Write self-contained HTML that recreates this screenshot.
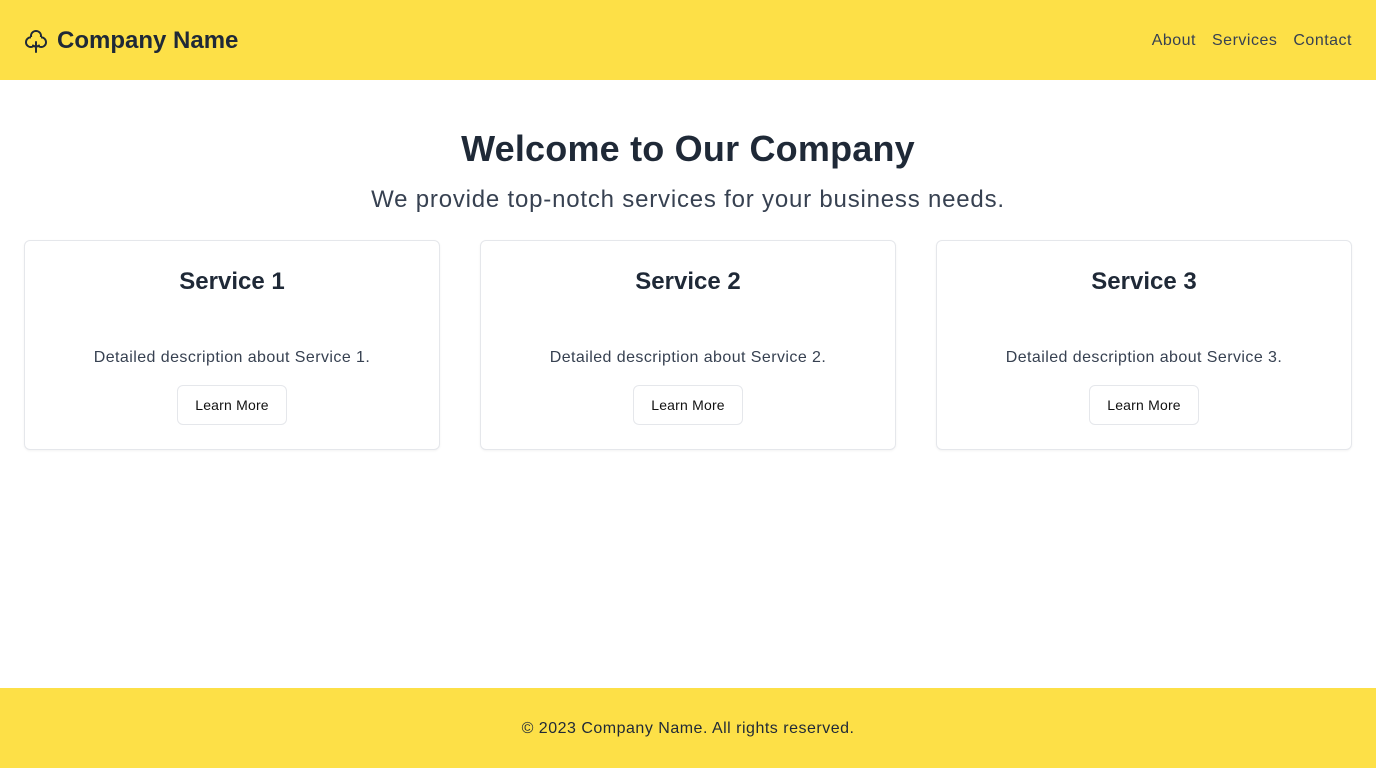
<!DOCTYPE html>
<html><head><style>
*{box-sizing:border-box;margin:0;padding:0}
body{width:1376px;height:768px;font-family:"Liberation Sans",sans-serif;background:#fff;color:#1f2937;position:relative;overflow:hidden}
header{height:80px;background:#fde047;display:flex;align-items:center;justify-content:space-between;padding:0 24px}
.logo{display:flex;align-items:center;font-weight:bold;font-size:24px;color:#1f2937;position:relative;top:1px}
.logo svg{margin-right:9px}
nav{position:relative;top:1px}
nav a{color:#374151;text-decoration:none;font-size:16px;margin-left:16px;letter-spacing:0.5px}
h1{text-align:center;font-size:36px;position:absolute;top:129px;left:0;right:0;line-height:40px;letter-spacing:0.2px}
.sub{position:absolute;top:186px;left:0;right:0;text-align:center;font-size:24px;color:#374151;letter-spacing:0.8px}
.cards{position:absolute;top:240px;left:24px;right:24px;display:flex;gap:40px}
.card{flex:1;height:210px;border:1px solid #e5e7eb;border-radius:6px;box-shadow:0 1px 2px rgba(0,0,0,.05);text-align:center;position:relative}
.card h2{font-size:24px;position:absolute;top:27px;left:0;right:0}
.card p{position:absolute;top:108px;left:0;right:0;font-size:16px;color:#374151;letter-spacing:0.43px}
.card button{position:absolute;top:144px;left:50%;transform:translateX(-50%);width:110px;height:40px;border:1px solid #e5e7eb;border-radius:6px;background:#fff;font-family:inherit;font-size:14px;color:#111;letter-spacing:0.2px}
footer{position:absolute;bottom:0;left:0;right:0;height:80px;background:#fde047;display:flex;align-items:center;justify-content:center;font-size:16px;color:#1f2937;letter-spacing:0.5px;padding-top:2px}
</style></head><body>
<header><div class="logo"><svg width="24" height="24" viewBox="0 0 24 24"><g fill="none" stroke="#1f2937" stroke-width="2"><circle cx="12" cy="7" r="5"/><circle cx="6.8" cy="13.2" r="4.8"/><circle cx="17.2" cy="13.2" r="4.8"/></g><g fill="#fde047"><circle cx="12" cy="7" r="4"/><circle cx="6.8" cy="13.2" r="3.8"/><circle cx="17.2" cy="13.2" r="3.8"/><rect x="7" y="8" width="10" height="9"/></g><path d="M12 13v10M9 16.5l3 1.5 3-1.5" fill="none" stroke="#1f2937" stroke-width="2" stroke-linecap="round"/></svg>Company Name</div>
<nav><a>About</a><a>Services</a><a>Contact</a></nav></header>
<h1>Welcome to Our Company</h1>
<div class="sub">We provide top-notch services for your business needs.</div>
<div class="cards">
<div class="card"><h2>Service 1</h2><p>Detailed description about Service 1.</p><button>Learn More</button></div>
<div class="card"><h2>Service 2</h2><p>Detailed description about Service 2.</p><button>Learn More</button></div>
<div class="card"><h2>Service 3</h2><p>Detailed description about Service 3.</p><button>Learn More</button></div>
</div>
<footer>© 2023 Company Name. All rights reserved.</footer>
</body></html>
